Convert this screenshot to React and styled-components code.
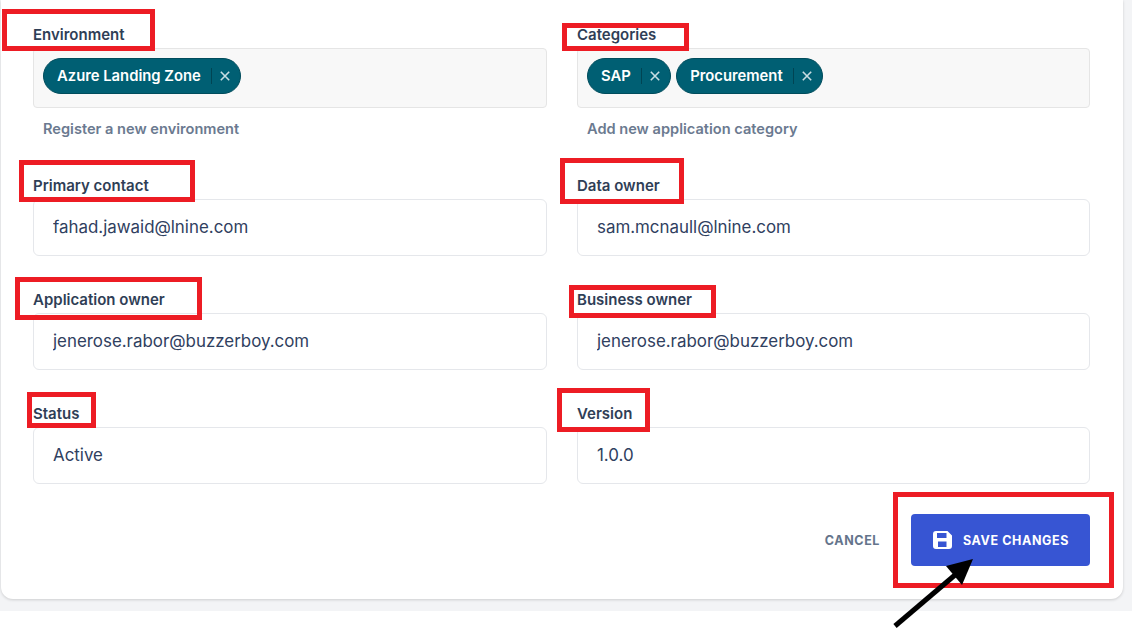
import React from "react";
import styled, { createGlobalStyle } from "styled-components";

const GlobalStyle = createGlobalStyle`
  html, body {
    margin: 0;
    padding: 0;
    background: #ffffff;
    font-family: Inter, "Liberation Sans", sans-serif;
  }
  * {
    box-sizing: border-box;
  }
`;

const Page = styled.div`
  position: relative;
  width: 1132px;
  height: 628px;
  overflow: hidden;
`;

const Backdrop = styled.div`
  height: 611px;
  background: #f3f4f6;
  padding: 0 9px 12px 1px;
`;

const Card = styled.form`
  height: 599px;
  background: #ffffff;
  border-radius: 0 0 12px 12px;
  box-shadow: 0 1px 3px rgba(0, 0, 0, 0.16);
  padding: 24px 33px 33px 32px;
  display: flex;
  flex-direction: column;
`;

const Grid = styled.div`
  display: grid;
  grid-template-columns: 514px 513px;
  column-gap: 30px;
  row-gap: 33px;
`;

const Field = styled.div`
  display: flex;
  flex-direction: column;
`;

const Label = styled.label`
  font-size: 15px;
  font-weight: 600;
  line-height: 22px;
  color: #2f3e56;
  margin-bottom: 2px;
`;

const TagBox = styled.div`
  height: 60px;
  background: #f8f8f8;
  border: 1px solid #e5e5e5;
  border-radius: 4px;
  padding: 9px;
  display: flex;
  align-items: flex-start;
  gap: 5px;
`;

const Tag = styled.span`
  height: 36px;
  border-radius: 18px;
  background: #005f73;
  border: 1px solid #004c5c;
  color: #ffffff;
  font-size: 14.8px;
  font-weight: 600;
  display: inline-flex;
  align-items: center;
  padding: 0 10.4px 1px 13px;
`;

const TagDivider = styled.span`
  width: 1px;
  height: 16px;
  background: #004453;
  margin: 1px 8px 0 10px;
`;

const TagClose = styled.svg`
  width: 10px;
  height: 10px;
  display: block;
  margin-top: 1px;
`;

const Hint = styled.a`
  font-size: 14.6px;
  font-weight: 600;
  line-height: 18px;
  color: #6b7a90;
  margin: 12px 0 4px 10px;
`;

const Input = styled.input`
  height: 57px;
  width: 100%;
  background: #ffffff;
  border: 1px solid #e5e7eb;
  border-radius: 6px;
  padding: 0 19px 2px;
  font-family: inherit;
  font-size: 16.9px;
  color: #2f4060;
  outline: none;
`;

const Actions = styled.div`
  display: flex;
  justify-content: flex-end;
  align-items: center;
  gap: 31px;
  margin-top: 30px;
`;

const CancelButton = styled.button`
  background: none;
  border: 0;
  padding: 0;
  font-family: inherit;
  font-size: 12.5px;
  font-weight: 700;
  letter-spacing: 0.6px;
  color: #64748b;
`;

const SaveButton = styled.button`
  width: 179px;
  height: 52px;
  background: #3755d3;
  border: 0;
  border-radius: 4px;
  padding: 0 0 0 1px;
  color: #ffffff;
  font-family: inherit;
  font-size: 12.5px;
  font-weight: 700;
  letter-spacing: 0.6px;
  display: flex;
  align-items: center;
  justify-content: center;
  gap: 11px;
`;

const SaveIcon = styled.svg`
  width: 19px;
  height: 18px;
  display: block;
`;

const Callout = styled.div`
  position: absolute;
  left: ${(p) => p.$x}px;
  top: ${(p) => p.$y}px;
  width: ${(p) => p.$w}px;
  height: ${(p) => p.$h}px;
  border: 5px solid #ed1c24;
  pointer-events: none;
`;

const ArrowLayer = styled.svg`
  position: absolute;
  left: 0;
  top: 0;
  width: 1132px;
  height: 628px;
  pointer-events: none;
`;

const callouts = [
  { x: 2, y: 9, w: 153, h: 42 },
  { x: 562, y: 23, w: 127, h: 28 },
  { x: 19, y: 160, w: 176, h: 42 },
  { x: 560, y: 158, w: 124, h: 46 },
  { x: 15, y: 277, w: 187, h: 43 },
  { x: 569, y: 285, w: 147, h: 33 },
  { x: 27, y: 392, w: 69, h: 36 },
  { x: 557, y: 388, w: 93, h: 44 },
  { x: 893, y: 492, w: 221, h: 96 },
];

const rows = [
  [
    { label: "Primary contact", value: "fahad.jawaid@lnine.com" },
    { label: "Data owner", value: "sam.mcnaull@lnine.com" },
  ],
  [
    { label: "Application owner", value: "jenerose.rabor@buzzerboy.com" },
    { label: "Business owner", value: "jenerose.rabor@buzzerboy.com" },
  ],
  [
    { label: "Status", value: "Active" },
    { label: "Version", value: "1.0.0" },
  ],
];

function TagChip({ name }) {
  return (
    <Tag>
      {name}
      <TagDivider />
      <TagClose viewBox="0 0 10 10" fill="none" stroke="#c9dde2" strokeWidth="1.6">
        <path d="M0.8 0.8l8.4 8.4M9.2 0.8l-8.4 8.4" />
      </TagClose>
    </Tag>
  );
}

function TagField({ label, tags, hint }) {
  return (
    <Field>
      <Label>{label}</Label>
      <TagBox>
        {tags.map((t) => (
          <TagChip key={t} name={t} />
        ))}
      </TagBox>
      <Hint>{hint}</Hint>
    </Field>
  );
}

function TextField({ label, value }) {
  return (
    <Field>
      <Label>{label}</Label>
      <Input defaultValue={value} readOnly />
    </Field>
  );
}

export default function App() {
  return (
    <Page>
      <GlobalStyle />
      <Backdrop>
        <Card>
          <Grid>
            <TagField label="Environment" tags={["Azure Landing Zone"]} hint="Register a new environment" />
            <TagField label="Categories" tags={["SAP", "Procurement"]} hint="Add new application category" />
            {rows.flat().map((f) => (
              <TextField key={f.label} label={f.label} value={f.value} />
            ))}
          </Grid>
          <Actions>
            <CancelButton type="button">CANCEL</CancelButton>
            <SaveButton type="button">
              <SaveIcon viewBox="0 0 19 18">
                <path
                  fill="#ffffff"
                  fillRule="evenodd"
                  d="M3 0h11.5L19 4.5V15a3 3 0 0 1-3 3H3a3 3 0 0 1-3-3V3a3 3 0 0 1 3-3zm1 2v5h9.5V2H4zm1 14h8.5v-5.5H5V16z"
                />
              </SaveIcon>
              SAVE CHANGES
            </SaveButton>
          </Actions>
        </Card>
      </Backdrop>
      {callouts.map((c) => (
        <Callout key={`${c.x}-${c.y}`} $x={c.x} $y={c.y} $w={c.w} $h={c.h} />
      ))}
      <ArrowLayer viewBox="0 0 1132 628">
        <path d="M895 626L955 575" stroke="#000000" strokeWidth="5" fill="none" />
        <path d="M973 559L946 566L962 585Z" fill="#000000" />
      </ArrowLayer>
    </Page>
  );
}
